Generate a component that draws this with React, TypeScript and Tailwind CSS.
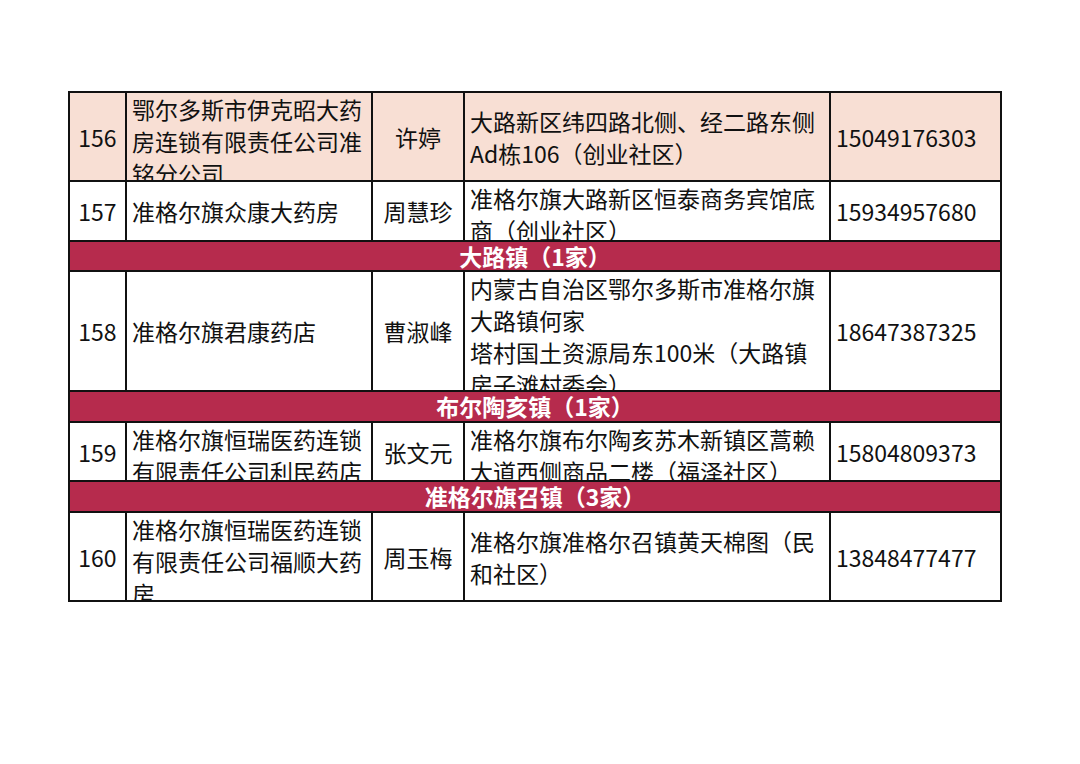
import React from 'react';

type Row =
  | { kind: 'section'; title: string }
  | {
      kind: 'store';
      no: string;
      name: string[];
      contact: string;
      address: string[];
      phone: string;
      shaded?: boolean;
    };

const ROWS: Row[] = [
  {
    kind: 'store',
    no: '156',
    name: ['鄂尔多斯市伊克昭大药', '房连锁有限责任公司准', '铭分公司'],
    contact: '许婷',
    address: ['大路新区纬四路北侧、经二路东侧', 'Ad栋106（创业社区）'],
    phone: '15049176303',
    shaded: true,
  },
  {
    kind: 'store',
    no: '157',
    name: ['准格尔旗众康大药房'],
    contact: '周慧珍',
    address: ['准格尔旗大路新区恒泰商务宾馆底', '商（创业社区）'],
    phone: '15934957680',
  },
  { kind: 'section', title: '大路镇（1家）' },
  {
    kind: 'store',
    no: '158',
    name: ['准格尔旗君康药店'],
    contact: '曹淑峰',
    address: [
      '内蒙古自治区鄂尔多斯市准格尔旗',
      '大路镇何家',
      '塔村国土资源局东100米（大路镇',
      '房子滩村委会）',
    ],
    phone: '18647387325',
  },
  { kind: 'section', title: '布尔陶亥镇（1家）' },
  {
    kind: 'store',
    no: '159',
    name: ['准格尔旗恒瑞医药连锁', '有限责任公司利民药店'],
    contact: '张文元',
    address: ['准格尔旗布尔陶亥苏木新镇区蒿赖', '大道西侧商品二楼（福泽社区）'],
    phone: '15804809373',
  },
  { kind: 'section', title: '准格尔旗召镇（3家）' },
  {
    kind: 'store',
    no: '160',
    name: ['准格尔旗恒瑞医药连锁', '有限责任公司福顺大药', '房'],
    contact: '周玉梅',
    address: ['准格尔旗准格尔召镇黄天棉图（民', '和社区）'],
    phone: '13848477477',
  },
];

const cell =
  'flex flex-col [justify-content:safe_center] overflow-hidden border-r-2 border-b-2 border-[#111] whitespace-nowrap';

function Lines({ lines }: { lines: string[] }) {
  return (
    <>
      {lines.map((l, i) => (
        <span key={i} className="block">
          {l}
        </span>
      ))}
    </>
  );
}

export default function App() {
  return (
    <div
      className="w-[1080px] h-[764px] bg-white pt-[91px] pl-[68px] text-[#111] text-[23px] leading-[32px]"
      style={{ fontFamily: '"Noto Sans CJK SC", "Noto Sans", sans-serif' }}
    >
      <div className="grid w-[934px] grid-cols-[57px_246px_92px_366px_171px] grid-rows-[89px_60px_30px_120px_31px_59px_31px_89px] border-t-2 border-l-2 border-[#111]">
        {ROWS.map((row, i) =>
          row.kind === 'section' ? (
            <div
              key={i}
              className="col-span-5 flex items-center justify-center border-r-2 border-b-2 border-[#111] bg-[#b62b4d] text-[23px] font-bold text-white leading-none"
            >
              {row.title}
            </div>
          ) : (
            <React.Fragment key={i}>
              <div className={`${cell} items-center ${row.shaded ? 'bg-[#f8dfd4]' : ''}`}>
                {row.no}
              </div>
              <div className={`${cell} pl-[5px] ${row.shaded ? 'bg-[#f8dfd4]' : ''}`}>
                <Lines lines={row.name} />
              </div>
              <div className={`${cell} items-center ${row.shaded ? 'bg-[#f8dfd4]' : ''}`}>
                {row.contact}
              </div>
              <div className={`${cell} pl-[5px] ${row.shaded ? 'bg-[#f8dfd4]' : ''}`}>
                <Lines lines={row.address} />
              </div>
              <div className={`${cell} pl-[5px] ${row.shaded ? 'bg-[#f8dfd4]' : ''}`}>
                {row.phone}
              </div>
            </React.Fragment>
          )
        )}
      </div>
    </div>
  );
}
